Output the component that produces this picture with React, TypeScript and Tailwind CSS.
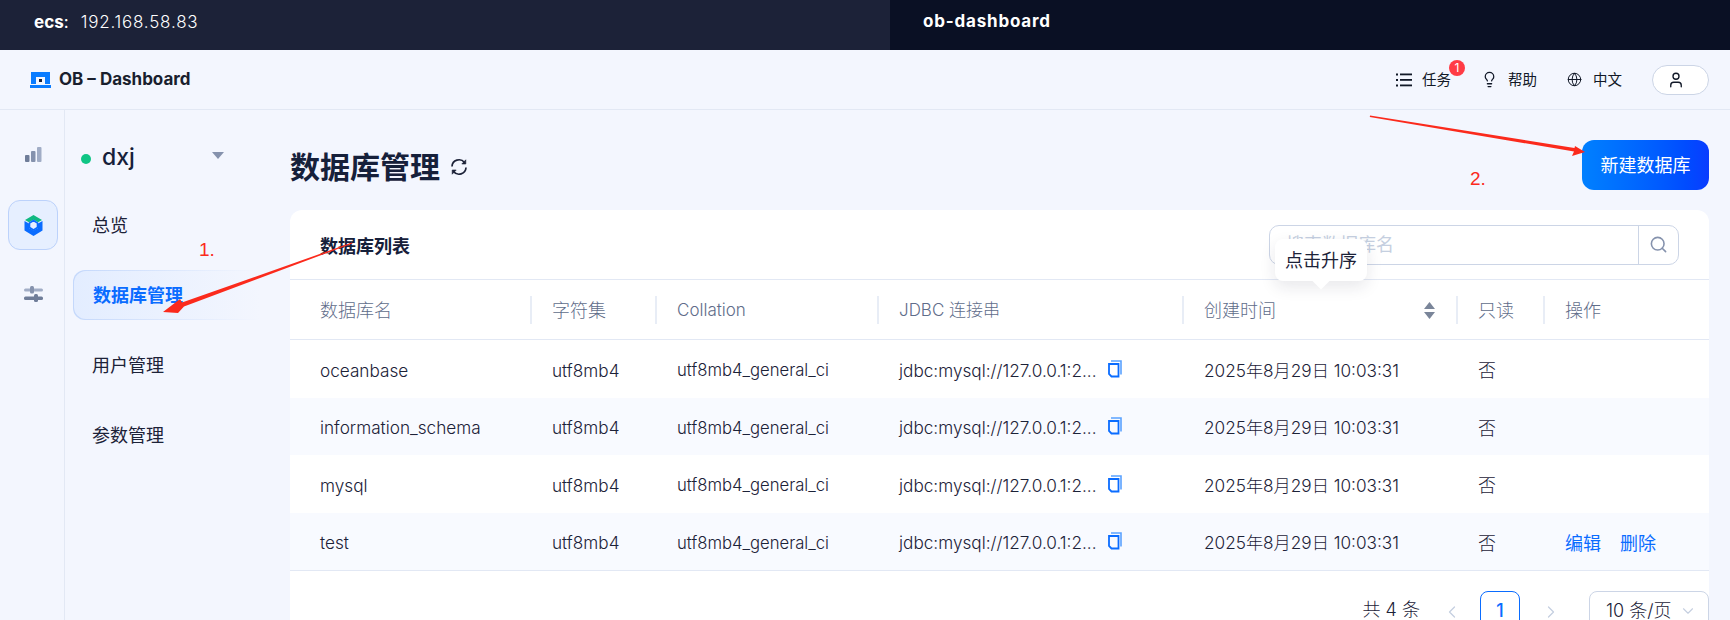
import { Globe, Lightbulb, Search, User, ChevronLeft, ChevronRight, ChevronDown } from "lucide-react";

const rows = ["oceanbase", "information_schema", "mysql", "test"];
const gridCols = "grid grid-cols-[242px_125px_222px_305px_274px_87px_164px]";

const Logo = () => (
  <svg width="21" height="16" viewBox="0 0 21 16">
    <path d="M1 0H20V12H15V5H6V12H1Z" fill="#0a7cff" />
    <rect x="9" y="7" width="3" height="3" fill="#1c2238" />
    <rect x="0" y="13" width="21" height="3" fill="#0a7cff" />
  </svg>
);

const BarsIcon = () => (
  <svg width="17" height="15" viewBox="0 0 17 15">
    <rect x="0" y="8" width="4.5" height="7" rx="1" fill="#6f7d99" />
    <rect x="6" y="4" width="4.5" height="11" rx="1" fill="#8592ad" />
    <rect x="12" y="0" width="4.5" height="15" rx="1" fill="#a1adc6" />
  </svg>
);

const HexIcon = () => (
  <svg width="19" height="21" viewBox="0 0 19 21">
    <path d="M9.5 0L18 5L14 7.3L9.5 4.7L5 7.3L1 5Z" fill="#10b981" />
    <path d="M0.5 6L5 8.5V13L9.5 15.6L14 13V8.5L18.5 6V15.5L9.5 21L0.5 15.5Z" fill="#0a6cff" />
    <path d="M9.5 5.5L13.5 8V12.5L9.5 15L5.5 12.5V8Z" fill="none" stroke="#0a6cff" strokeWidth="1.6" />
  </svg>
);

const SlidersIcon = () => (
  <svg width="19" height="16" viewBox="0 0 19 16">
    <rect x="0" y="2.5" width="19" height="3" rx="1.5" fill="#a1adc6" />
    <rect x="6" y="0" width="4" height="7.5" rx="1.5" fill="#8592ad" />
    <rect x="0" y="10.5" width="19" height="3.5" rx="1.5" fill="#6f7d99" />
    <rect x="10" y="8" width="4" height="8" rx="1.5" fill="#6f7d99" />
  </svg>
);

const TaskIcon = () => (
  <svg width="16" height="14" viewBox="0 0 16 14" fill="#111827">
    <rect x="0" y="0.5" width="2" height="2" />
    <rect x="4" y="0.5" width="12" height="1.8" />
    <rect x="0" y="6" width="2" height="2" />
    <rect x="4" y="6" width="12" height="1.8" />
    <rect x="0" y="11.5" width="2" height="2" />
    <rect x="4" y="11.5" width="12" height="1.8" />
  </svg>
);

const RefreshIcon = () => (
  <svg width="18" height="18" viewBox="0 0 18 18" fill="none" stroke="#1c2238" strokeWidth="1.7">
    <path d="M2 8.5A7 7 0 0 1 14.5 4.5" />
    <path d="M16 9.5A7 7 0 0 1 3.5 13.5" />
    <path d="M15.8 1.8V6H11.8Z" fill="#1c2238" strokeWidth="0.6" />
    <path d="M2.2 16.2V12H6.2Z" fill="#1c2238" strokeWidth="0.6" />
  </svg>
);

const CopyIcon = () => (
  <svg width="14" height="18" viewBox="0 0 14 18" fill="none" className="-mt-1 shrink-0">
    <path d="M3 1H13V14.5" stroke="#5aa2ff" strokeWidth="1.6" />
    <path d="M1 4H10.5V16.5H3.5L1 14Z" stroke="#0a6cff" strokeWidth="1.8" />
  </svg>
);

const SortIcon = () => (
  <svg width="11" height="17" viewBox="0 0 11 17">
    <path d="M5.5 0L11 7H0Z" fill="#7a8599" />
    <path d="M5.5 17L11 10H0Z" fill="#7a8599" />
  </svg>
);

const Annotations = () => (
  <svg width="1730" height="620" className="absolute left-0 top-0 pointer-events-none">
    <path d="M352 242.6L352.5 243.4L184 306.5L178 313L163 312L180 299L182 302.5Z" fill="#fb2a1c" />
    <path d="M1370 115.6L1369.8 117L1574 151.5L1572 156L1585 152L1575 146L1574.5 148Z" fill="#fb2a1c" />
  </svg>
);

export default function App() {
  return (
    <div className="relative h-[620px] w-[1730px] overflow-hidden bg-[#f3f6fe] text-[18px] text-[#1c2238] font-['Inter','Noto_Sans_CJK_SC',sans-serif]">
      {/* Top bar */}
      <div className="flex h-[50px] text-white">
        <div className="flex w-[890px] items-center bg-[#1c2238] pb-1 pl-[34px]">
          <span className="text-[17px] font-bold">ecs</span>
          <span className="w-[17px] text-[17px]">:</span>
          <span className="text-[17px] font-light tracking-[0.8px]">192.168.58.83</span>
        </div>
        <div className="flex flex-1 items-center bg-[#0a1024] pb-1.5 pl-[33px] text-[17px] font-bold tracking-[0.8px]">ob-dashboard</div>
      </div>

      {/* Header */}
      <div className="flex h-[60px] items-center justify-between border-b border-[#e2e8f4] pl-[30px] pr-[21px]">
        <div className="flex items-center gap-2">
          <Logo />
          <span className="text-[17px] font-bold text-[#1a1f2e]">OB – Dashboard</span>
        </div>
        <div className="flex items-center text-[14.5px] text-[#111827]">
          <div className="relative flex items-center gap-[10px]">
            <TaskIcon />
            <span>任务</span>
            <span className="absolute -right-[14px] -top-[9px] flex h-4 w-4 items-center justify-center rounded-full bg-[#ff3b45] text-[12px] leading-none text-white">1</span>
          </div>
          <div className="ml-[30px] flex items-center gap-[10px]">
            <Lightbulb size={17} strokeWidth={1.8} />
            <span>帮助</span>
          </div>
          <div className="ml-[30px] flex items-center gap-[11px]">
            <Globe size={15} strokeWidth={1.6} />
            <span>中文</span>
          </div>
          <div className="ml-[30px] flex h-[30px] w-[57px] items-center rounded-full border border-[#ccd5e6] bg-white pl-[14px]">
            <User size={18} strokeWidth={1.8} />
          </div>
        </div>
      </div>

      <div className="flex h-[510px]">
        {/* Icon rail */}
        <div className="flex w-[65px] shrink-0 flex-col items-start border-r border-[#e2e8f4] pl-2 pt-[37px]">
          <div className="flex h-[15px] w-[50px] items-center justify-center">
            <BarsIcon />
          </div>
          <div className="mt-[38px] flex h-[50px] w-[50px] items-center justify-center rounded-xl border border-[#bcd2fb] bg-[#e6efff]">
            <HexIcon />
          </div>
          <div className="mt-9 flex h-4 w-[50px] items-center justify-center">
            <SlidersIcon />
          </div>
        </div>

        {/* Tenant nav */}
        <div className="w-[225px] shrink-0 pl-[8px] pt-[22px]">
          <div className="mb-[18px] flex h-[50px] items-center pl-[8px] pr-[66px]">
            <span className="mt-1 h-[10px] w-[10px] rounded-full bg-[#0fc585]" />
            <span className="ml-[11px] text-[23px] font-medium text-[#16203a]">dxj</span>
            <span className="ml-auto mb-1 h-0 w-0 border-x-[6px] border-t-[7px] border-x-transparent border-t-[#8592ad]" />
          </div>
          <div className="flex flex-col gap-5">
            <div className="flex h-[50px] items-center pl-[19px]">总览</div>
            <div className="h-[50px] w-[187px] rounded-l-xl bg-gradient-to-r from-[#c4d8fb] to-[#f3f6fe] p-px pr-0">
              <div className="flex h-full items-center rounded-l-xl bg-gradient-to-r from-[#e3edff] to-[#f3f6fe] pl-[19px] font-bold text-[#0a6cff]">数据库管理</div>
            </div>
            <div className="flex h-[50px] items-center pl-[19px]">用户管理</div>
            <div className="flex h-[50px] items-center pl-[19px]">参数管理</div>
          </div>
        </div>

        {/* Main */}
        <div className="flex-1 pr-[21px]">
          <div className="mb-5 mt-[30px] flex h-[50px] items-center justify-between">
            <div className="flex items-center gap-[10px] pt-1">
              <h1 className="text-[30px] font-bold leading-none text-[#16203a]">数据库管理</h1>
              <RefreshIcon />
            </div>
            <button className="h-[50px] w-[127px] rounded-xl bg-gradient-to-r from-[#0080ff] to-[#0a3cff] text-white">新建数据库</button>
          </div>

          <div className="h-[500px] rounded-t-xl bg-white">
            <div className="flex h-[70px] items-center justify-between border-b border-[#e2e8f4] pl-[30px] pr-[30px]">
              <span className="pt-1 font-bold text-[#16203a]">数据库列表</span>
              <div className="flex h-10 w-[410px] items-stretch rounded-[10px] border border-[#ccd5e6]">
                <div className="flex flex-1 items-center pl-4 text-[#c5cfe0]">搜索数据库名</div>
                <div className="flex w-10 items-center justify-center border-l border-[#ccd5e6] text-[#8592ad]">
                  <Search size={19} strokeWidth={2} />
                </div>
              </div>
            </div>

            {/* Table head */}
            <div className={`${gridCols} h-[60px] items-center border-b border-[#e2e8f4] font-light text-[#5f6d8a]`}>
              <div className="flex h-7 items-center border-r-2 border-[#e8edf6] pl-[30px] pt-0.5">数据库名</div>
              <div className="flex h-7 items-center border-r-2 border-[#e8edf6] pl-5 pt-0.5">字符集</div>
              <div className="flex h-7 items-center border-r-2 border-[#e8edf6] pl-5 pt-0.5 text-[17px]">Collation</div>
              <div className="flex h-7 items-center border-r-2 border-[#e8edf6] pl-5 pt-0.5 text-[17px]">JDBC 连接串</div>
              <div className="flex h-7 items-center justify-between border-r-2 border-[#e8edf6] pl-5 pr-[21px] pt-0.5">
                创建时间
                <SortIcon />
              </div>
              <div className="flex h-7 items-center border-r-2 border-[#e8edf6] pl-5 pt-0.5">只读</div>
              <div className="flex h-7 items-center pl-5 pt-0.5">操作</div>
            </div>

            {/* Table body */}
            <div className="border-b border-[#e2e8f4]">
              {rows.map((name, i) => (
                <div key={name} className={`${gridCols} h-[57.5px] items-center pt-1 text-[17.2px] font-light ${i % 2 === 1 ? "bg-[#f8faff]" : "bg-white"}`}>
                  <div className="pl-[30px]">{name}</div>
                  <div className="pl-5">utf8mb4</div>
                  <div className="pl-5 text-[16.7px]">utf8mb4_general_ci</div>
                  <div className="flex items-center gap-[7px] pl-5">
                    <span className="w-[202px] shrink-0 whitespace-nowrap">jdbc:mysql://127.0.0.1:2...</span>
                    <CopyIcon />
                  </div>
                  <div className="pl-5">2025年8月29日 10:03:31</div>
                  <div className="pl-5 text-[18px]">否</div>
                  <div className="flex gap-[19px] pl-5 text-[18px] font-normal text-[#0a6cff]">
                    {name === "test" && (
                      <>
                        <span>编辑</span>
                        <span>删除</span>
                      </>
                    )}
                  </div>
                </div>
              ))}
            </div>

            {/* Pagination */}
            <div className="flex items-start justify-end pt-5">
              <span className="mr-[22px] mt-[9px] font-light leading-5">共 4 条</span>
              <ChevronLeft size={20} strokeWidth={1.5} className="mt-[11px] text-[#c5cfe0]" />
              <div className="ml-[18px] flex h-10 w-10 items-center justify-center rounded-lg border border-[#0a6cff] font-medium leading-5 text-[#0a6cff]">1</div>
              <ChevronRight size={20} strokeWidth={1.5} className="ml-[21px] mt-[11px] text-[#c5cfe0]" />
              <div className="ml-[28px] flex h-10 w-[120px] items-center justify-between rounded-lg border border-[#ccd5e6] pl-4 pr-[11px]">
                <span className="font-light leading-5">10 条/页</span>
                <ChevronDown size={18} strokeWidth={1.5} className="text-[#c5cfe0]" />
              </div>
            </div>
          </div>
        </div>
      </div>

      {/* Sort tooltip */}
      <div className="absolute left-[1275px] top-[239px] flex h-[42px] w-[92px] items-center justify-center rounded-lg bg-white shadow-[0_6px_16px_rgba(28,34,56,0.10)]">
        点击升序
        <span className="absolute -bottom-[6px] left-1/2 h-3 w-3 -translate-x-1/2 rotate-45 bg-white" />
      </div>

      {/* Red screenshot annotations */}
      <Annotations />
      <span className="absolute left-[199px] top-[236px] font-['Liberation_Sans',sans-serif] text-[19px] text-[#fb2a1c]">1.</span>
      <span className="absolute left-[1470px] top-[165px] font-['Liberation_Sans',sans-serif] text-[19px] text-[#fb2a1c]">2.</span>
    </div>
  );
}
